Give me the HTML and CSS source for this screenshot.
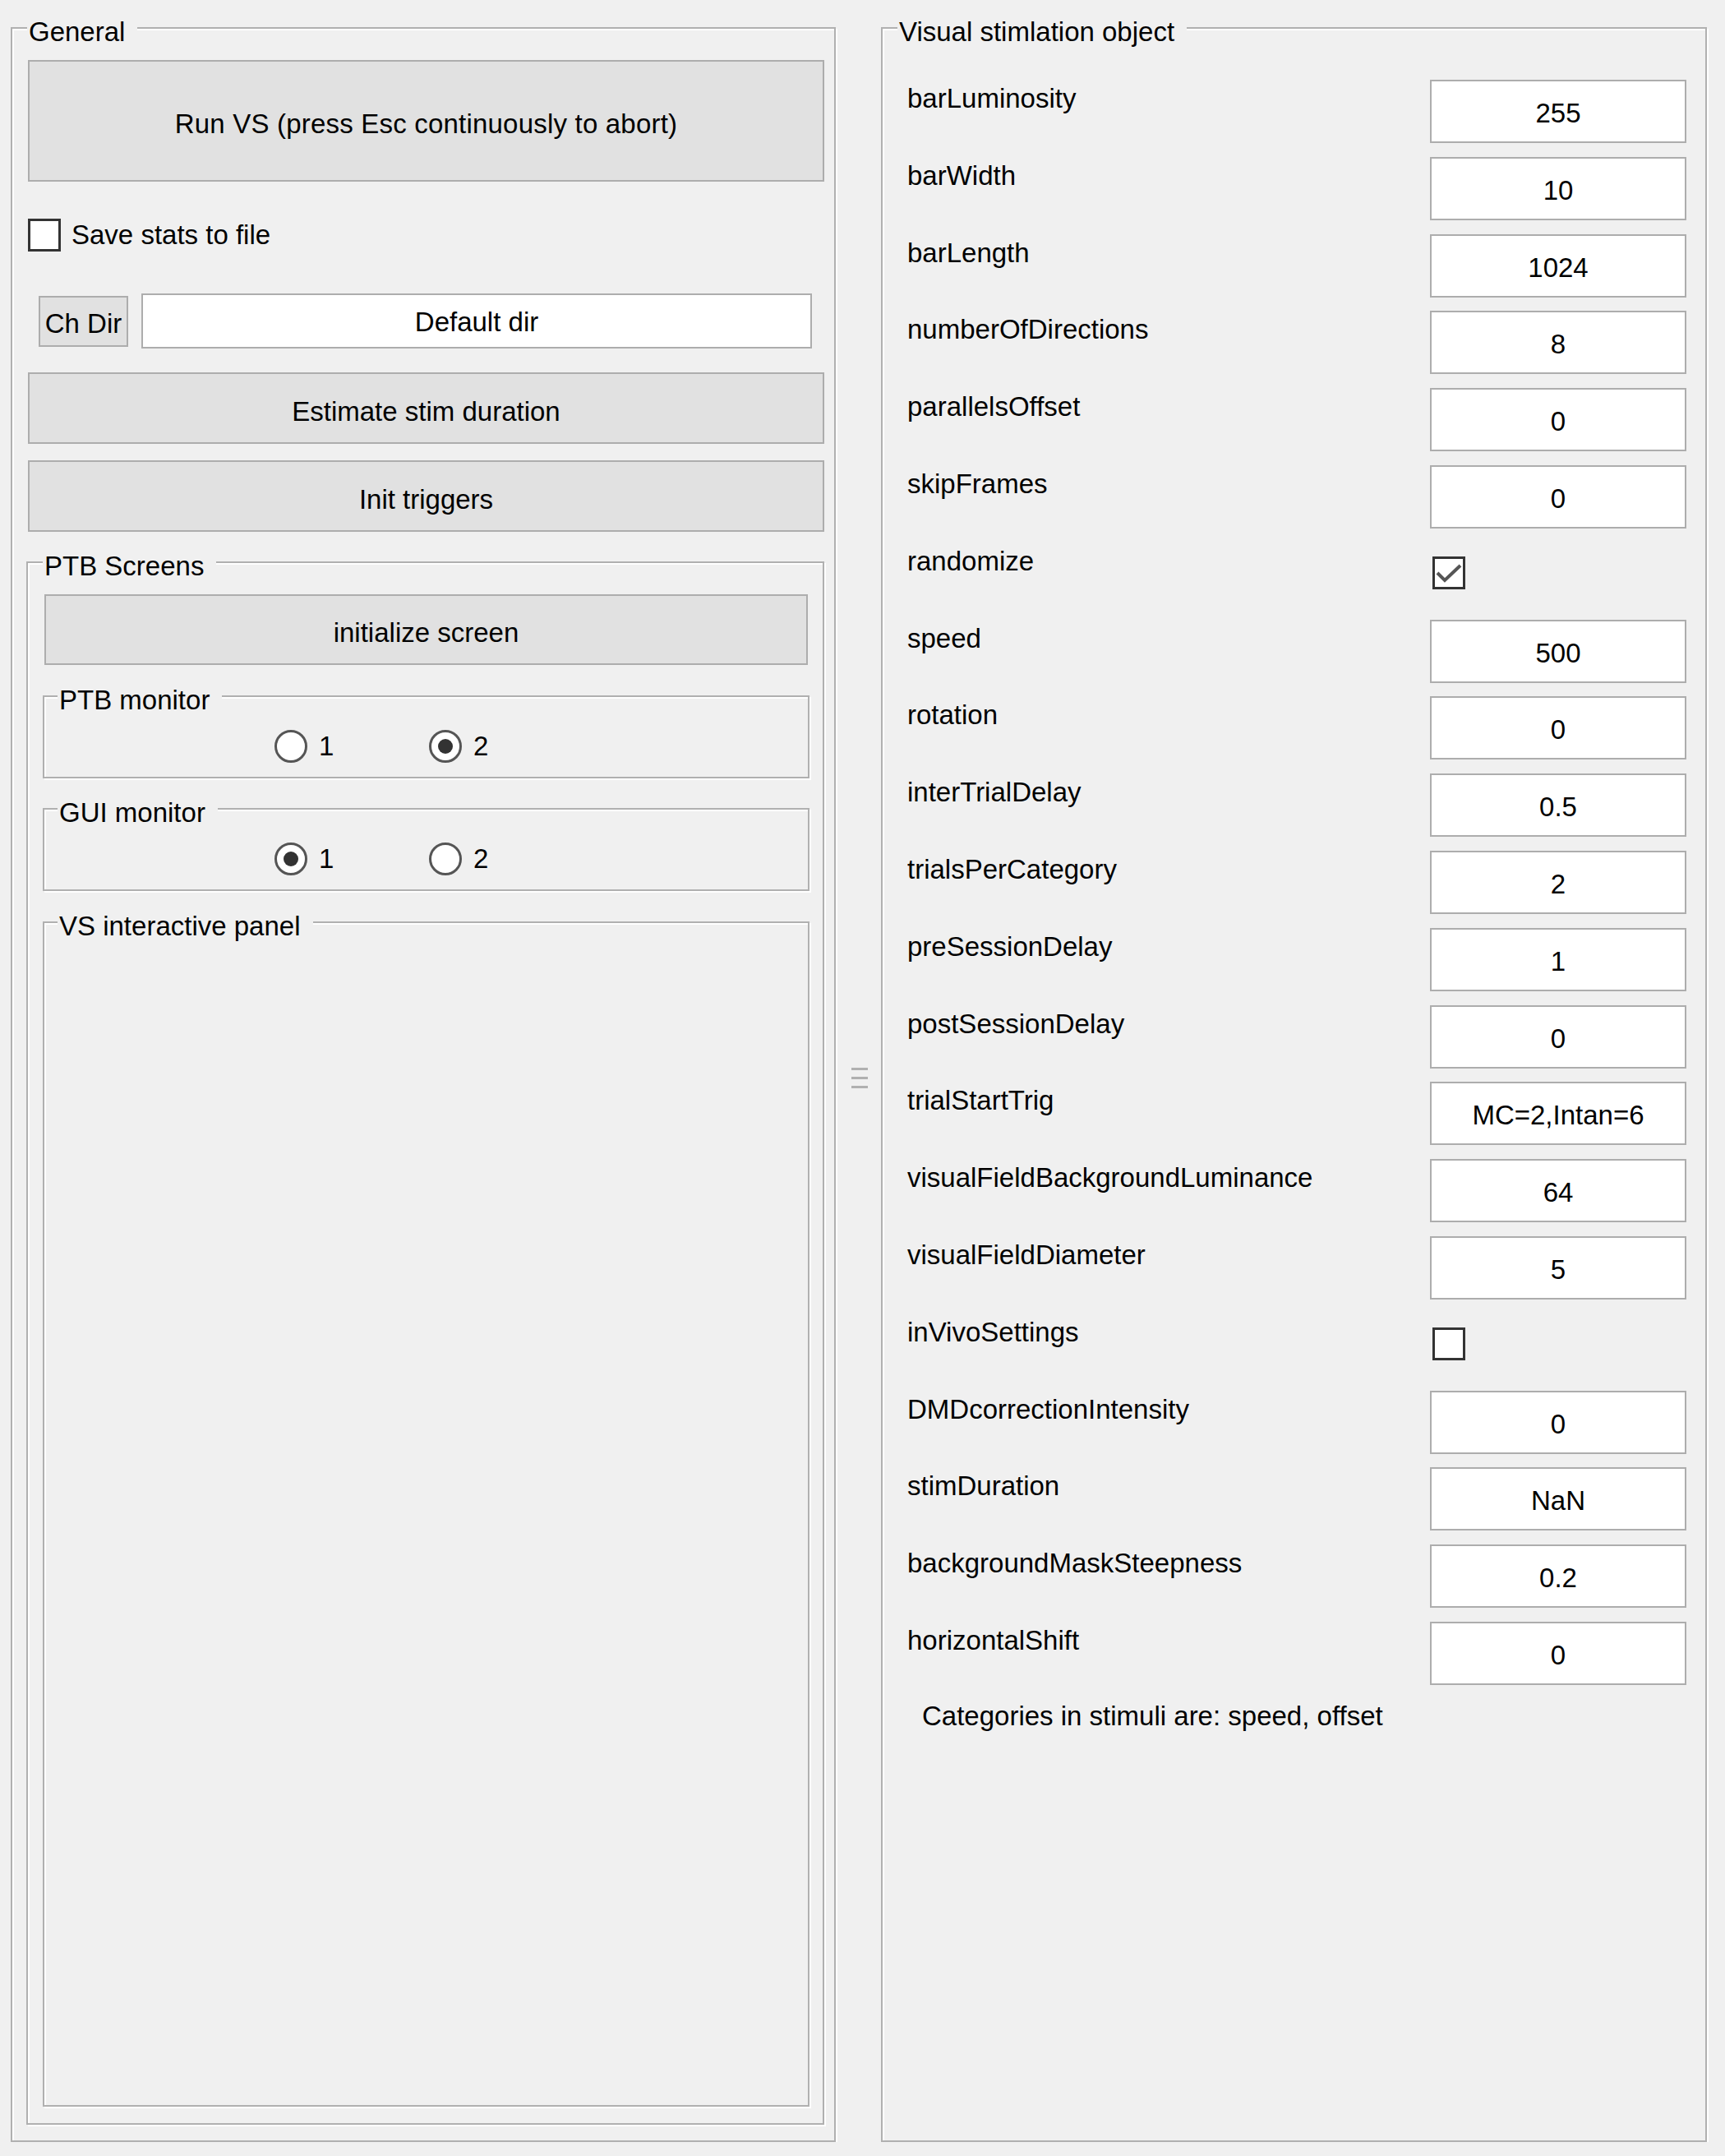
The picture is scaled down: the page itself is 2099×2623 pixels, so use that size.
FILE: index.html
```html
<!DOCTYPE html>
<html lang="en">
<head>
<meta charset="utf-8">
<title>Visual stimulation</title>
<link rel="stylesheet" href="styles.css">
</head>
<body>
<div class="window">
  <section class="group general">
    <div class="group-title">General</div>
    <div class="btn btn-run">Run VS (press Esc continuously to abort)</div>
    <div class="check-row"><span class="checkbox"></span><span>Save stats to file</span></div>
    <div class="dir-row">
      <div class="btn btn-chdir">Ch Dir</div>
      <div class="textbox dir-box">Default dir</div>
    </div>
    <div class="btn btn-wide btn-estimate">Estimate stim duration</div>
    <div class="btn btn-wide btn-init">Init triggers</div>
    <section class="group ptb">
      <div class="group-title">PTB Screens</div>
      <div class="btn btn-init-screen">initialize screen</div>
      <section class="group monitor monitor-ptb">
        <div class="group-title sub">PTB monitor</div>
        <div class="radios">
          <span class="radio-item"><span class="radio"></span>1</span>
          <span class="radio-item"><span class="radio on"></span>2</span>
        </div>
      </section>
      <section class="group monitor monitor-gui">
        <div class="group-title sub">GUI monitor</div>
        <div class="radios">
          <span class="radio-item"><span class="radio on"></span>1</span>
          <span class="radio-item"><span class="radio"></span>2</span>
        </div>
      </section>
      <section class="group monitor vs-panel">
        <div class="group-title sub">VS interactive panel</div>
      </section>
    </section>
  </section>

  <div class="splitter"><span></span><span></span><span></span></div>

  <section class="group vso">
    <div class="group-title">Visual stimlation object</div>
    <div class="prop"><span class="prop-name">barLuminosity</span><span class="textbox value">255</span></div>
    <div class="prop"><span class="prop-name">barWidth</span><span class="textbox value">10</span></div>
    <div class="prop"><span class="prop-name">barLength</span><span class="textbox value">1024</span></div>
    <div class="prop"><span class="prop-name">numberOfDirections</span><span class="textbox value">8</span></div>
    <div class="prop"><span class="prop-name">parallelsOffset</span><span class="textbox value">0</span></div>
    <div class="prop"><span class="prop-name">skipFrames</span><span class="textbox value">0</span></div>
    <div class="prop"><span class="prop-name">randomize</span><span class="checkbox prop-check"><svg class="tick" width="34" height="34" viewBox="0 0 34 34"><path d="M3 17 L12 26 L31 8" fill="none" stroke="#555" stroke-width="4"/></svg></span></div>
    <div class="prop"><span class="prop-name">speed</span><span class="textbox value">500</span></div>
    <div class="prop"><span class="prop-name">rotation</span><span class="textbox value">0</span></div>
    <div class="prop"><span class="prop-name">interTrialDelay</span><span class="textbox value">0.5</span></div>
    <div class="prop"><span class="prop-name">trialsPerCategory</span><span class="textbox value">2</span></div>
    <div class="prop"><span class="prop-name">preSessionDelay</span><span class="textbox value">1</span></div>
    <div class="prop"><span class="prop-name">postSessionDelay</span><span class="textbox value">0</span></div>
    <div class="prop"><span class="prop-name">trialStartTrig</span><span class="textbox value">MC=2,Intan=6</span></div>
    <div class="prop"><span class="prop-name">visualFieldBackgroundLuminance</span><span class="textbox value">64</span></div>
    <div class="prop"><span class="prop-name">visualFieldDiameter</span><span class="textbox value">5</span></div>
    <div class="prop"><span class="prop-name">inVivoSettings</span><span class="checkbox prop-check"></span></div>
    <div class="prop"><span class="prop-name">DMDcorrectionIntensity</span><span class="textbox value">0</span></div>
    <div class="prop"><span class="prop-name">stimDuration</span><span class="textbox value">NaN</span></div>
    <div class="prop"><span class="prop-name">backgroundMaskSteepness</span><span class="textbox value">0.2</span></div>
    <div class="prop"><span class="prop-name">horizontalShift</span><span class="textbox value">0</span></div>
    <div class="categories">Categories in stimuli are: speed, offset</div>
  </section>
</div>
</body>
</html>
```

FILE: styles.css
```css
* { box-sizing: border-box; }

html, body {
  margin: 0;
  background: #f0f0f0;
}

body {
  font-family: "Liberation Sans", Arial, sans-serif;
  font-size: 33px;
  line-height: 38px;
  color: #000;
}

.window {
  display: flex;
  align-items: flex-start;
  padding: 33px 0 0 13px;
}

/* etched group box */
.group {
  position: relative;
  border: 2px solid #b0b0b0;
  box-shadow: inset 2px 2px 0 #fff, 2px 2px 0 #fff;
}

.group-title {
  position: absolute;
  top: -15px;
  left: 18px;
  padding: 0 15px 0 2px;
  background: #f0f0f0;
  white-space: nowrap;
}

.group-title.sub { left: 16px; }

/* buttons and boxes */
.btn {
  display: flex;
  align-items: center;
  justify-content: center;
  background: #e1e1e1;
  border: 2px solid #adadad;
  padding-top: 8px;
  white-space: nowrap;
}

.textbox {
  background: #fff;
  border: 2px solid #adadad;
  text-align: center;
  white-space: nowrap;
}

.checkbox {
  display: inline-block;
  position: relative;
  width: 40px;
  height: 40px;
  flex: none;
  background: #fff;
  border: 3px solid #333;
}

.tick { display: block; }

/* General panel */
.general {
  width: 1004px;
  height: 2573px;
  display: flex;
  flex-direction: column;
  align-items: flex-start;
  padding: 38px 12px 19px 19px;
}

.btn-run {
  width: 969px;
  height: 148px;
  letter-spacing: 0.2px;
}

.check-row {
  display: flex;
  align-items: center;
  gap: 13px;
  margin-top: 45px;
  height: 40px;
}

.dir-row {
  display: flex;
  align-items: flex-start;
  margin-top: 51px;
  padding-left: 13px;
}

.btn-chdir {
  width: 109px;
  height: 62px;
  margin-top: 3px;
  padding-top: 6px;
}

.dir-box {
  width: 816px;
  height: 67px;
  margin-left: 16px;
  padding-top: 14px;
}

.btn-wide {
  width: 969px;
  height: 87px;
}

.btn-estimate { margin-top: 29px; }
.btn-init { margin-top: 20px; }

/* PTB screens */
.ptb {
  flex: 1;
  width: 971px;
  margin-top: 36px;
  margin-left: -2px;
  display: flex;
  flex-direction: column;
  align-items: flex-start;
  padding: 38px 0 20px 0;
}

.btn-init-screen {
  width: 929px;
  height: 86px;
  margin-left: 20px;
}

.monitor {
  width: 933px;
  margin-left: 18px;
}

.monitor-ptb { height: 101px; margin-top: 37px; }
.monitor-gui { height: 101px; margin-top: 36px; }
.vs-panel { flex: 1; margin-top: 37px; }

.radios {
  display: flex;
  padding: 40px 0 0 280px;
}

.radio-item {
  display: flex;
  align-items: center;
  gap: 14px;
  width: 188px;
  height: 40px;
}

.radio {
  display: inline-flex;
  align-items: center;
  justify-content: center;
  width: 40px;
  height: 40px;
  border-radius: 50%;
  border: 3px solid #555;
  background: #fff;
}

.radio.on::after {
  content: "";
  width: 18px;
  height: 18px;
  border-radius: 50%;
  background: #333;
}

/* splitter */
.splitter {
  width: 55px;
  display: flex;
  flex-direction: column;
  align-items: center;
  gap: 8px;
  padding-top: 1266px;
  padding-left: 3px;
}

.splitter span {
  width: 20px;
  height: 3px;
  background: #b0b0b0;
}

/* Visual stimulation object */
.vso {
  width: 1005px;
  height: 2573px;
  padding: 62px 23px 0 30px;
}

.prop {
  display: grid;
  grid-template-columns: 1fr 312px;
  height: 93.8px;
}

.prop-name {
  padding-top: 4px;
  white-space: nowrap;
}

.value {
  height: 77px;
  padding-top: 5px;
  line-height: 67px;
}

.prop-check {
  margin: 17px 0 0 3px;
}

.categories {
  margin: 2px 0 0 18px;
  white-space: nowrap;
}
```
